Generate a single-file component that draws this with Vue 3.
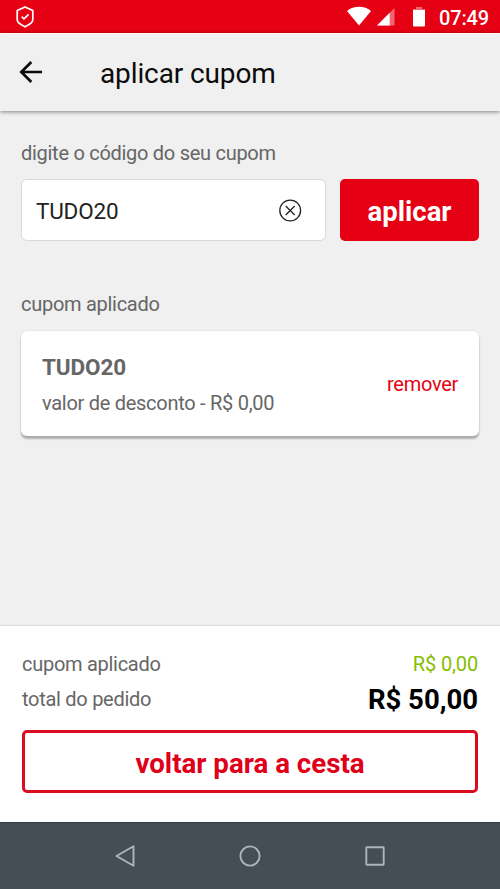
<script setup>
const coupon = 'TUDO20'
const discount = 'R$ 0,00'
const total = 'R$ 50,00'
</script>

<template>
  <div class="screen">
    <div class="status">
      <svg class="shield" width="18" height="22" viewBox="0 0 18 22" fill="none" stroke="#fff" stroke-width="1.700">
        <path d="M9 1 1.200 4.600v9.200c0 2.600 4 5.200 7.800 6.900 3.800-1.700 7.800-4.300 7.800-6.900V4.600z" />
        <path d="m5.7 10.6 2.3 2.2 4.600-4.400" />
      </svg>
      <svg class="wifi" width="26" height="20" viewBox="0 0 26 20"><path d="M1 5C7.500-.6 18.500-.6 25 5L13 19.500z" fill="#fff" /></svg>
      <svg class="signal" width="18" height="18" viewBox="0 0 18 18"><path d="M0 17.500 17.500 0v17.500z" fill="#fff" fill-opacity=".4" /><path d="M0 17.500 12.700 4.800v12.700z" fill="#fff" /></svg>
      <svg class="battery" width="12" height="20" viewBox="0 0 12 20"><path d="M3 0h6v2h3v3H0V2h3z" fill="#fff" fill-opacity=".4" /><path d="M0 3h12v15.500a1 1 0 0 1-1 1H1a1 1 0 0 1-1-1z" fill="#fff" /></svg>
      <span class="clock">07:49</span>
    </div>
    <header class="header">
      <svg width="24" height="24" viewBox="0 0 24 24" fill="none" stroke="#0b0b0b" stroke-width="2.700"><path d="M23 12H2.500M12.300 2 2.300 12l10 10" /></svg>
      <h1>aplicar cupom</h1>
    </header>
    <main class="content">
      <div class="label">digite o código do seu cupom</div>
      <div class="form">
        <div class="field">
          <span>{{ coupon }}</span>
          <svg width="24" height="24" viewBox="0 0 24 24" fill="none" stroke="#222" stroke-width="1.300"><circle cx="12.200" cy="11.500" r="10.400" /><path d="m7.700 7 9 9m0-9-9 9" /></svg>
        </div>
        <button class="apply">aplicar</button>
      </div>
      <div class="label applied">cupom aplicado</div>
      <div class="card">
        <div class="info">
          <strong>{{ coupon }}</strong>
          <span>valor de desconto - {{ discount }}</span>
        </div>
        <a class="remove">remover</a>
      </div>
    </main>
    <footer class="summary">
      <div class="row"><span>cupom aplicado</span><span class="green">{{ discount }}</span></div>
      <div class="row"><span>total do pedido</span><strong>{{ total }}</strong></div>
      <button class="back">voltar para a cesta</button>
    </footer>
    <nav class="nav">
      <svg width="24" height="24" viewBox="0 0 24 24"><path d="M3.500 12 20.500 2.200v19.600z" /></svg>
      <svg width="24" height="24" viewBox="0 0 24 24"><circle cx="12" cy="12" r="9.600" /></svg>
      <svg width="24" height="24" viewBox="0 0 24 24"><rect x="3.300" y="3.300" width="17.400" height="17.400" rx=".5" /></svg>
    </nav>
  </div>
</template>

<style>
body { background: #f0f0f0; }
</style>

<style scoped>
* { box-sizing: border-box; }
.screen {
  width: 500px;
  height: 889px;
  display: flex;
  flex-direction: column;
  overflow: hidden;
  background: #f0f0f0;
  color: #666;
  font-family: Roboto, "Liberation Sans", sans-serif;
  font-size: 20px;
  line-height: 24px;
  letter-spacing: -.28px;
  white-space: nowrap;
}
svg { display: block; flex: none; }
button { font-family: inherit; font-weight: 700; border-radius: 5px; padding: 0; }
.status {
  height: 33px;
  flex: none;
  display: flex;
  align-items: flex-start;
  padding: 6px 11px 0 16px;
  background: #e60014;
  color: #fff;
}
.wifi { margin-left: auto; }
.signal { margin: 2px 0 0 5px; }
.battery { margin: 1px 0 0 18px; }
.clock { margin-left: 14px; font-weight: 500; letter-spacing: -.15px; }
.header {
  height: 78px;
  flex: none;
  display: flex;
  align-items: center;
  padding-left: 19px;
  border-top: 1px solid #fafafa;
  box-shadow: 0 1px 4px rgba(0, 0, 0, .45);
}
.header svg { margin-top: -1px; }
h1 { margin: 3px 0 0 57px; font-size: 28px; line-height: 32px; font-weight: 400; letter-spacing: -.12px; color: #0b0b0b; }
.content { flex: 1; padding: 30px 21px 0; }
.form { display: flex; gap: 14px; margin-top: 14px; }
.field {
  flex: 1;
  height: 62px;
  display: flex;
  align-items: center;
  justify-content: space-between;
  padding: 1px 23px 0 14px;
  border: 1px solid #d9d9d9;
  border-radius: 6px;
  background: #fff;
  color: #222;
  font-size: 22.5px;
  letter-spacing: -.2px;
}
.field span { padding-top: 1px; }
.apply { width: 139px; height: 62px; border: 0; background: #e60014; color: #fff; font-size: 27.500px; padding-top: 3px; }
.applied { margin-top: 51px; }
.card {
  height: 105px;
  margin-top: 15px;
  padding: 0 21px;
  display: flex;
  align-items: center;
  justify-content: space-between;
  border-radius: 6px;
  background: #fff;
  box-shadow: 0 3px 2px rgba(0, 0, 0, .27), 0 0 2px rgba(0, 0, 0, .12);
}
.info { display: flex; flex-direction: column; gap: 12px; padding-top: 2px; }
.info strong { font-size: 22.500px; letter-spacing: -.1px; }
.remove { color: #e60014; }
.summary {
  height: 197px;
  flex: none;
  padding: 26px 22px 0;
  border-top: 1px solid #dcdcdc;
  background: #fff;
}
.row { height: 35px; display: flex; justify-content: space-between; }
.row strong { font-size: 27.500px; line-height: 26px; letter-spacing: 0; color: #000; }
.row .green { color: #83be00; letter-spacing: -.15px; }
.back {
  display: block;
  width: 456px;
  height: 63px;
  margin-top: 8px;
  padding-top: 3px;
  border: 3px solid #dc0c20;
  background: #fff;
  color: #e00018;
  font-size: 27.700px;
}
.nav {
  height: 67px;
  flex: none;
  display: flex;
  justify-content: space-between;
  align-items: center;
  padding: 0 113px;
  border-top: 1px solid #343b41;
  background: #454e55;
}
.nav svg { fill: none; stroke: #adb4bc; stroke-width: 1.900; stroke-linejoin: round; }
</style>
